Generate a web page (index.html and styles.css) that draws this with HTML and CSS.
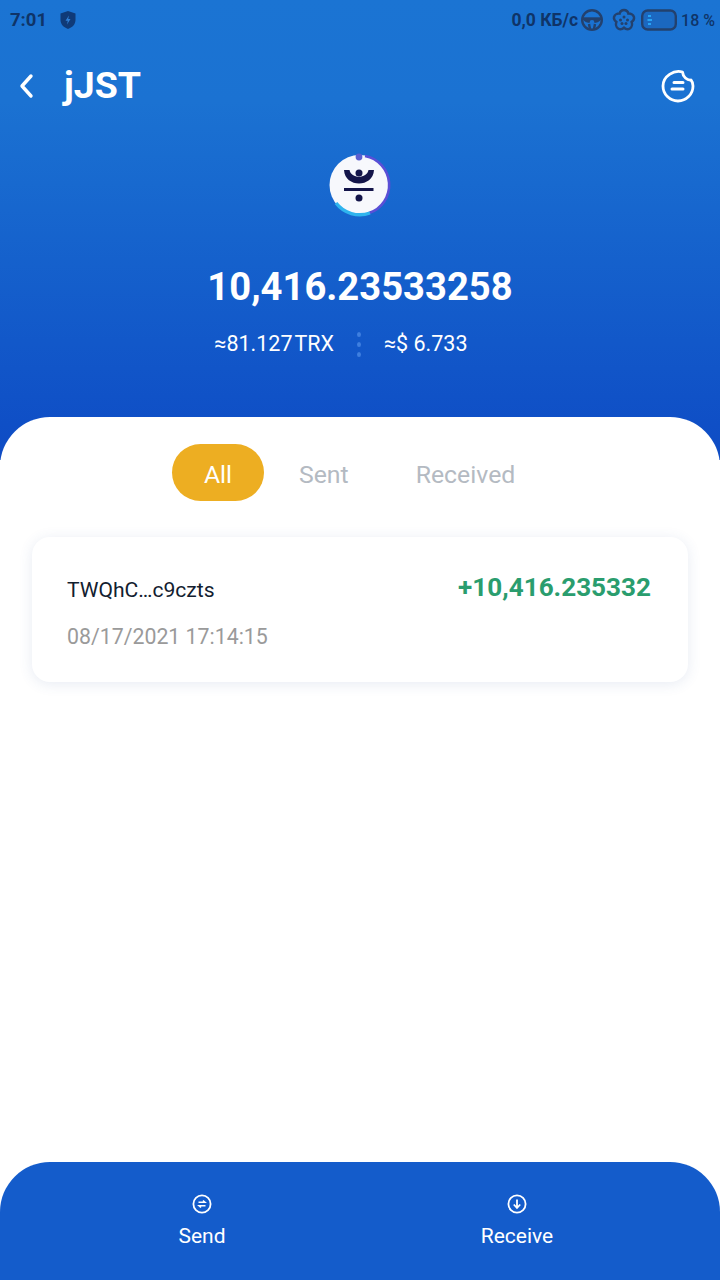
FILE: index.html
```
<!DOCTYPE html>
<html lang="en">
<head>
<meta charset="utf-8">
<title>jJST</title>
<link rel="stylesheet" href="styles.css">
</head>
<body>
<div class="app">
  <header class="hero">
    <div class="status">
      <div class="status-left">
        <span class="time">7:01</span>
        <svg class="shield" width="18" height="20" viewBox="0 0 18 20"><path d="M9 1 L16.500 3.600 V10 C16.500 14.500 13 17.500 9 19 C5 17.500 1.500 14.500 1.500 10 V3.600 Z" fill="#0f3a78"/><path d="M10 5.500 L6.500 10.800 H8.800 L8 14.500 L11.500 9 H9.200 Z" fill="#2f7fd6"/></svg>
      </div>
      <div class="status-right">
        <span class="net">0,0 КБ/с</span>
        <svg class="sicon" width="24" height="24" viewBox="0 0 24 24" fill="none" stroke="#23416e" stroke-width="2.400"><circle cx="12" cy="12" r="9.800"/><path d="M2.600 10.500 H21.400" /><path d="M2.600 11 C5 15 9 15 12 15 C15 15 19 15 21.400 11 Z" fill="#23416e" stroke="none"/><circle cx="12" cy="14.500" r="2.400" fill="#1b72d2" stroke="none"/><path d="M9 16 L10 21 M15 16 L14 21"/></svg>
        <svg class="sicon flower" width="24" height="24" viewBox="0 0 24 24" fill="none" stroke="#23416e" stroke-width="2.400"><path d="M12 2 C14.500 2 16 3.600 16.400 5.600 C18.600 5.400 21.400 6.400 22 9 C22.500 11.400 21 13 19.600 14 C20.400 16 20 19 17.800 20.600 C15.600 22 13.400 21 12 19.600 C10.600 21 8.400 22 6.200 20.600 C4 19 3.600 16 4.400 14 C3 13 1.500 11.400 2 9 C2.600 6.400 5.400 5.400 7.600 5.600 C8 3.600 9.500 2 12 2 Z"/><circle cx="12" cy="9" r="1.500" fill="#23416e" stroke="none"/><circle cx="8.500" cy="12" r="1.500" fill="#23416e" stroke="none"/><circle cx="15.500" cy="12" r="1.500" fill="#23416e" stroke="none"/><circle cx="10" cy="15.500" r="1.500" fill="#23416e" stroke="none"/><circle cx="14" cy="15.500" r="1.500" fill="#23416e" stroke="none"/></svg>
        <svg class="battery" width="36" height="22" viewBox="0 0 36 22" fill="none"><rect x="1.200" y="1.500" width="33.600" height="19" rx="5.500" stroke="#23416e" stroke-width="2.400" fill="#1b68c0"/><path d="M7 7 H10 M6.500 11 H11 M7 15 H10" stroke="#28a5f5" stroke-width="2.200"/></svg>
        <span class="pct">18 %</span>
      </div>
    </div>
    <div class="topbar">
      <svg class="back" width="16" height="26" viewBox="0 0 16 26" fill="none"><path d="M13 3 L4 13 L13 23" stroke="#fff" stroke-width="3.400" stroke-linecap="round" stroke-linejoin="round"/></svg>
      <h1 class="title">jJST</h1>
      <svg class="menu" width="34" height="34" viewBox="0 0 34 34" fill="none"><path d="M21.500 3 C13 0.500 2 7 2 17 C2 25.300 8.700 32 17 32 C25.300 32 32 25.300 32 17 C32 14.500 31.300 12.500 30 11 C26 11.500 22 8 21.500 3 Z" stroke="#fff" stroke-width="2.800" stroke-linejoin="round"/><path d="M13 13.500 H22 M11 20 H22" stroke="#fff" stroke-width="3" stroke-linecap="round"/></svg>
    </div>
    <div class="logo">
      <svg width="64" height="64" viewBox="0 0 64 64" fill="none">
        <circle cx="30.500" cy="32" r="30" fill="#f7f8fc"/>
        <path d="M36 3 A 29.500 29.500 0 0 1 40 60" stroke="#5a4fd6" stroke-width="2.600"/>
        <path d="M41 60 A 30 30 0 0 1 7 50" stroke="#2fb4ee" stroke-width="3.400"/>
        <circle cx="30" cy="4" r="3.400" fill="#5a5fd0"/>
        <path d="M15 17 H20.500 C22 26 38 26 39.500 17 H45 C44 35 16 35 15 17 Z" fill="#14154a"/>
        <circle cx="30" cy="20" r="3.500" fill="#14154a"/>
        <rect x="15" y="35" width="29.500" height="3" fill="#14154a"/>
        <circle cx="30" cy="45" r="3.500" fill="#14154a"/>
      </svg>
    </div>
    <div class="amount">10,416.23533258</div>
    <div class="values">
      <span class="val val-trx">≈81.127 TRX</span>
      <span class="dots"><i></i><i></i><i></i></span>
      <span class="val">≈$ 6.733</span>
    </div>
  </header>
  <main class="sheet">
    <nav class="tabs">
      <span class="tab active">All</span>
      <span class="tab sent">Sent</span>
      <span class="tab received">Received</span>
    </nav>
    <article class="card">
      <div class="row">
        <span class="addr">TWQhC…c9czts</span>
        <span class="plus">+10,416.235332</span>
      </div>
      <div class="date">08/17/2021 17:14:15</div>
    </article>
  </main>
  <footer class="actions">
    <div class="action">
      <svg width="20" height="20" viewBox="0 0 20 20" fill="none" stroke="#fff"><circle cx="10" cy="10" r="8.600" stroke-width="1.800"/><path d="M6.500 8.300 H13 L11 6.500 M13.500 11.700 H7 L9 13.500" stroke-width="1.500"/></svg>
      <span class="action-label">Send</span>
    </div>
    <div class="action">
      <svg width="20" height="20" viewBox="0 0 20 20" fill="none" stroke="#fff"><circle cx="10" cy="10" r="8.600" stroke-width="1.800"/><path d="M10 5.500 V13.500 M6.800 10.500 L10 14 L13.200 10.500" stroke-width="1.800"/></svg>
      <span class="action-label">Receive</span>
    </div>
  </footer>
</div>
</body>
</html>
```
FILE: styles.css
```
* { box-sizing: border-box; }
html, body { margin: 0; padding: 0; }
body { font-family: Roboto, "Liberation Sans", sans-serif; background: #fff; }
.app { width: 720px; height: 1280px; display: flex; flex-direction: column; overflow: hidden; background: #fff; position: relative; }
.hero { height: 460px; flex: none; background: linear-gradient(180deg, #1b74d3 0%, #1b72d2 22%, #0f4fc6 92%, #0f4cc4 100%); color: #fff; }
.status { height: 40px; display: flex; justify-content: space-between; align-items: center; padding: 0 5px 0 10px; color: #0f3468; font-weight: 700; }
.status-left { display: flex; align-items: center; gap: 12px; }
.time { font-size: 18.500px; font-weight: 700; }
.shield { display: block; }
.status-right { display: flex; align-items: center; }
.net { font-size: 17.500px; margin-right: 2px; }
.sicon { display: block; }
.flower { margin-left: 8px; }
.battery { display: block; margin-left: 5px; }
.pct { font-size: 16px; font-weight: 500; margin-left: 4px; }
.topbar { height: 60px; margin-top: 16px; display: flex; align-items: center; padding: 0 25px 0 18px; }
.back { display: block; }
.title { margin: 0 0 0 30px; font-size: 37.500px; font-weight: 700; line-height: 58px; height: 60px; flex: 1; letter-spacing: 0; }
.menu { display: block; }
.logo { display: flex; justify-content: center; margin-top: 37px; height: 64px; padding-left: 2px; }
.logo svg { display: block; }
.amount { margin-top: 47px; text-align: center; font-size: 38.200px; font-weight: 700; line-height: 46px; }
.values { margin-top: 17px; display: grid; grid-template-columns: 1fr auto 1fr; align-items: center; font-size: 21.500px; line-height: 34px; padding-right: 2px; }
.val-trx { word-spacing: -3px; justify-self: end; }
.dots { display: flex; flex-direction: column; gap: 5px; margin: 0 23px; }
.dots i { display: block; width: 4px; height: 5px; border-radius: 50%; background: #3f7fdf; }
.sheet { flex: 1; margin-top: -43px; background: #fff; border-radius: 50px 50px 0 0; position: relative; padding: 27px 32px 0; }
.tabs { display: flex; align-items: center; padding-left: 140px; height: 57px; }
.tab { font-size: 24.800px; color: #b4bac2; padding-top: 4px; }
.active { width: 92px; height: 57px; border-radius: 29px; background: #edae22; color: #fff; display: flex; align-items: center; justify-content: center; }
.sent { margin-left: 35px; }
.received { margin-left: 67px; }
.card { margin-top: 36px; height: 145px; border-radius: 18px; background: #fff; box-shadow: 0 2px 14px rgba(60, 90, 160, 0.12); padding: 30px 37px 0 35px; }
.row { display: flex; justify-content: space-between; align-items: center; height: 40px; }
.addr { font-size: 21.100px; color: #12202f; padding-top: 4px; }
.plus { font-size: 26.100px; font-weight: 700; color: #2a9d6e; }
.date { margin-top: 16px; font-size: 21.300px; color: #9a9a9a; line-height: 28px; }
.actions { height: 118px; flex: none; background: #145ccb; border-radius: 50px 50px 0 0; display: flex; color: #fff; padding-top: 32px; }
.action { display: flex; flex-direction: column; align-items: center; font-size: 21px; }
.action-label { margin-top: 10px; }
.action:first-child { width: 404px; }
.action:last-child { width: 226px; }
.action svg { display: block; }
```
